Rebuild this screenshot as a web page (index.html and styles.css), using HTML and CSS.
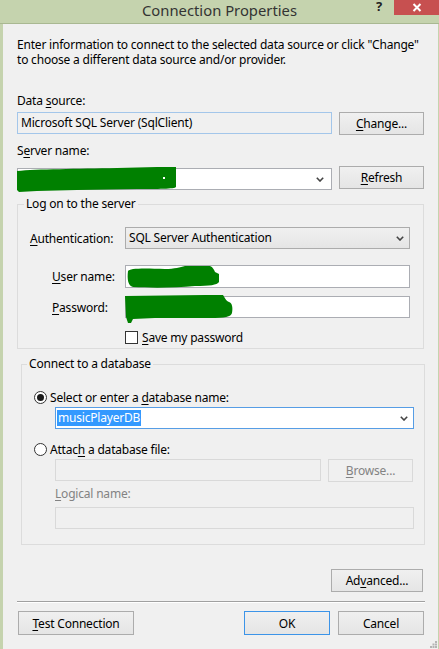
FILE: index.html
```html
<!DOCTYPE html>
<html>
<head>
<meta charset="utf-8">
<title>Connection Properties</title>
<link rel="stylesheet" href="styles.css">
</head>
<body>
<div class="titlebar">
  <span class="title">Connection Properties</span>
  <span class="help">?</span>
  <span class="close"><svg width="10" height="9" viewBox="0 0 10 9"><path d="M1.5 1 L8.5 8 M8.5 1 L1.5 8" stroke="#fff" stroke-width="2" fill="none"/></svg></span>
</div>
<div class="window">
  <p class="intro"><span class="line">Enter information to connect to the selected data source or click "Change"</span><span class="line">to choose a different data source and/or provider.</span></p>

  <div class="label lbl-ds">Data <u>s</u>ource:</div>
  <div class="row row-ds">
    <div class="field ds">Microsoft SQL Server (SqlClient)</div>
    <div class="btn side"><span><u>C</u>hange...</span></div>
  </div>

  <div class="label lbl-sv">S<u>e</u>rver name:</div>
  <div class="row row-sv">
    <div class="field combo sv">
      <svg class="blob" width="162" height="27" viewBox="0 0 162 27"><path d="M0,4 C20,2 60,2 100,1 L140,0 L159,0 L159,20 C158,22 140,22 120,22 L60,23 L20,24 L2,25 L0,23 Z" fill="#008000"/><rect x="146" y="10" width="2" height="2" fill="#fff"/></svg>
      <svg class="chev" width="8" height="5" viewBox="0 0 8 5"><path d="M0.8 0.8 L4 4 L7.2 0.8" stroke="#444" stroke-width="1.6" fill="none"/></svg>
    </div>
    <div class="btn side"><span><u>R</u>efresh</span></div>
  </div>

  <div class="group logon">
    <div class="caption">Log on to the server</div>
    <div class="grow auth">
      <div class="glabel l-auth"><u>A</u>uthentication:</div>
      <div class="field combo ro">SQL Server Authentication
        <svg class="chev" width="8" height="5" viewBox="0 0 8 5"><path d="M0.8 0.8 L4 4 L7.2 0.8" stroke="#444" stroke-width="1.6" fill="none"/></svg>
      </div>
    </div>
    <div class="grow user">
      <div class="glabel l-user"><u>U</u>ser name:</div>
      <div class="field tb h23">
        <svg class="blob" width="96" height="26" viewBox="0 0 96 26"><path d="M3,7 C4,4 20,4 40,5 C50,5 55,3 60,2 L85,2 C88,3 89,6 90,8 L94,10 L94,18 C92,21 85,22 70,22 C50,24 25,24 8,23 C3,22 2,15 3,7 Z" fill="#008000"/></svg>
      </div>
    </div>
    <div class="grow pw">
      <div class="glabel l-user"><u>P</u>assword:</div>
      <div class="field tb">
        <svg class="blob pwb" width="110" height="29" viewBox="0 0 110 29"><path d="M0,1 L80,0 L98,0 C100,3 101,6 104,7 C107,8 108,12 107,18 C106,22 100,23 85,23 L30,23 L8,24 L6,28 L3,28 L1,22 Z" fill="#008000"/></svg>
      </div>
    </div>
    <div class="grow chk">
      <div class="glabel"></div>
      <div class="checkline"><span class="checkbox"></span><span><u>S</u>ave my password</span></div>
    </div>
  </div>

  <div class="group db">
    <div class="caption">Connect to a database</div>
    <div class="radioline r1"><span class="radio on"></span><span>Select or enter a <u>d</u>atabase name:</span></div>
    <div class="field combo dbsel"><span class="sel">musicPlayerDB</span>
      <svg class="chev" width="8" height="5" viewBox="0 0 8 5"><path d="M0.8 0.8 L4 4 L7.2 0.8" stroke="#444" stroke-width="1.6" fill="none"/></svg>
    </div>
    <div class="radioline r2"><span class="radio"></span><span>Attac<u>h</u> a database file:</span></div>
    <div class="filerow">
      <div class="field dis file"></div>
      <div class="btn dis browse"><span><u>B</u>rowse...</span></div>
    </div>
    <div class="label dislabel"><u>L</u>ogical name:</div>
    <div class="field dis logical"></div>
  </div>

  <div class="advrow"><div class="btn adv"><span>Ad<u>v</u>anced...</span></div></div>
  <div class="sep"></div>
  <div class="btnrow">
    <div class="btn test"><span><u>T</u>est Connection</span></div>
    <div class="btn ok"><span>OK</span></div>
    <div class="btn cancel"><span>Cancel</span></div>
  </div>
  <svg class="grip" width="7" height="7" viewBox="0 0 7 7"><g fill="#b4b4b4"><rect x="5" y="0" width="2" height="2"/><rect x="2.5" y="2.5" width="2" height="2"/><rect x="5" y="2.5" width="2" height="2"/><rect x="0" y="5" width="2" height="2"/><rect x="2.5" y="5" width="2" height="2"/><rect x="5" y="5" width="2" height="2"/></g></svg>
</div>
</body>
</html>
```

FILE: styles.css
```css
* { box-sizing: border-box; }

body {
  margin: 0;
  width: 439px;
  height: 649px;
  overflow: hidden;
  background: #c5d3ae;
  font-family: "Noto Sans", "Open Sans", sans-serif;
  font-size: 12px;
  letter-spacing: -0.2px;
  color: #000;
}

u { text-decoration: underline; text-underline-offset: 2px; }

.titlebar {
  position: relative;
  height: 24px;
  border-bottom: 1px solid #a9b892;
  text-align: center;
  letter-spacing: 0;
}
.title {
  font-size: 14.8px;
  line-height: 21px;
  color: #333;
}
.help {
  position: absolute;
  left: 376px;
  top: 0;
  font-size: 13px;
  line-height: 12px;
  font-weight: bold;
  color: #222;
}
.close {
  position: absolute;
  right: 0;
  top: 0;
  width: 45px;
  height: 15px;
  background: #c75050;
  display: flex;
  align-items: center;
  justify-content: center;
}

.window {
  position: relative;
  margin: 0 1px 0 3px;
  height: 625px;
  background: #f0f0f0;
  padding: 0 14px;
}

.intro {
  margin: 0;
  padding-top: 13px;
  display: flex;
  flex-direction: column;
  white-space: nowrap;
}
.intro .line { line-height: 15px; height: 15px; }

.label { line-height: 15px; white-space: nowrap; }
.lbl-ds { margin-top: 26px; }
.lbl-sv { margin-top: 8px; }

.row { display: flex; align-items: flex-start; }
.row-ds { margin-top: 4px; height: 23px; }
.row-sv { margin-top: 8px; height: 24px; }

.field {
  position: relative;
  height: 22px;
  border: 1px solid #abadb3;
  background: #fff;
  line-height: 20px;
  padding-left: 3px;
  white-space: nowrap;
}
.ds {
  width: 315px;
  background: #f0f0f0;
  border-color: #a3c6ea;
}
.sv { width: 315px; margin-top: 2px; }
.combo .chev { position: absolute; right: 5px; top: 8px; }
.sv .chev { right: 7px; }
.blob { position: absolute; left: -1px; top: -2px; }
.pwb { top: -2px; }

.btn {
  height: 23px;
  border: 1px solid #acacac;
  background: linear-gradient(#f0f0f0, #e5e5e5);
  display: flex;
  align-items: center;
  justify-content: center;
  line-height: 21px;
  white-space: nowrap;
}
.side { width: 85px; margin-left: 7px; }

.group {
  border: 1px solid #dcdcdc;
}
.caption {
  margin: -9px 0 0 6px;
  padding: 0 2px;
  width: max-content;
  line-height: 16px;
  background: #f0f0f0;
}
.logon { margin-top: 14px; height: 145px; }

.grow {
  display: grid;
  grid-template-columns: 107px 1fr;
  align-items: center;
  margin-right: 13px;
}
.auth { margin-top: 15px; }
.user { margin-top: 16px; }
.pw { margin-top: 8px; }
.chk { margin-top: 13px; }
.glabel { white-space: nowrap; line-height: 15px; }
.l-auth { padding-left: 12px; }
.l-user { padding-left: 34px; }
.ro {
  background: linear-gradient(#f0f0f0, #e5e5e5);
  border-color: #acacac;
}
.tb { height: 22px; }
.h23 { height: 23px; }

.checkline { display: flex; align-items: center; gap: 4px; line-height: 15px; height: 13px; }
.checkbox {
  width: 13px;
  height: 13px;
  border: 1px solid #333;
  background: #fff;
  flex: none;
}

.db {
  margin: 15px -1px 0 4px;
  height: 181px;
  padding: 0 10px 0 0;
}
.db .caption { margin-left: 5px; }
.radioline {
  display: flex;
  align-items: center;
  gap: 3px;
  height: 16px;
  line-height: 15px;
  margin-left: 12px;
  white-space: nowrap;
}
.r1 { margin-top: 17px; }
.r2 { margin-top: 12px; }
.radio {
  width: 13px;
  height: 13px;
  border: 1px solid #333;
  border-radius: 50%;
  background: #fff;
  flex: none;
  display: flex;
  align-items: center;
  justify-content: center;
}
.radio.on::after {
  content: "";
  width: 7px;
  height: 7px;
  border-radius: 50%;
  background: #1a1a1a;
}
.dbsel {
  margin: 2px 0 0 33px;
  border-color: #569de5;
  padding-left: 1px;
}
.sel {
  background: #3399ff;
  color: #fff;
  padding: 0 1px;
  line-height: 16px;
  display: inline-block;
}
.filerow {
  display: flex;
  margin: 2px 0 0 33px;
  height: 23px;
}
.dis {
  border-color: #d9d9d9;
  background: #f0f0f0;
}
.file { width: 266px; }
.browse {
  width: 85px;
  margin-left: 7px;
  color: #838383;
  background: #f0f0f0;
  border-color: #d9d9d9;
}
.dislabel { margin: 4px 0 0 33px; color: #838383; }
.logical { margin: 6px 0 0 33px; }

.advrow {
  display: flex;
  justify-content: flex-end;
  margin-top: 24px;
}
.adv { width: 92px; margin-right: 1px; }

.sep {
  margin: 9px -1px 0 0;
  height: 2px;
  border-top: 1px solid #a0a0a0;
  border-bottom: 1px solid #fff;
}

.btnrow {
  display: flex;
  margin-top: 8px;
}
.btnrow .btn { height: 24px; }
.test { width: 116px; margin-left: 1px; }
.ok { width: 86px; margin-left: auto; border-color: #3c94e8; }
.cancel { width: 86px; margin-left: 8px; }

.grip { position: absolute; right: 1px; bottom: 1px; }
```
